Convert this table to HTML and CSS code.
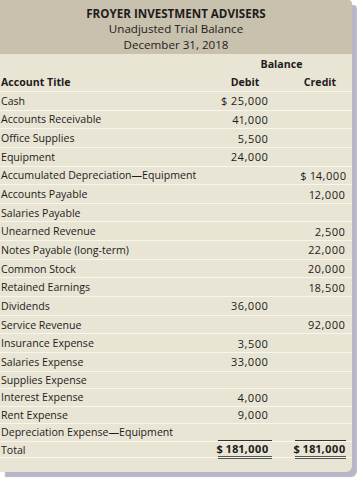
FILE: index.html
```html
<!DOCTYPE html>
<html>
<head>
<meta charset="utf-8">
<link rel="stylesheet" href="styles.css">
</head>
<body>
<div class="card">
  <header class="head">
    <div class="company">FROYER INVESTMENT ADVISERS</div>
    <div class="sub">Unadjusted Trial Balance</div>
    <div class="sub">December 31, 2018</div>
  </header>
  <div class="table">
    <div class="row hrow plain"><span></span><span class="balance">Balance</span></div>
    <div class="row hrow"><span>Account Title</span><span class="ch">Debit</span><span class="ch">Credit</span></div>
    <div class="row"><span>Cash</span><span class="num">$ 25,000</span><span class="num cr"></span></div>
    <div class="row"><span>Accounts Receivable</span><span class="num">41,000</span><span class="num cr"></span></div>
    <div class="row"><span>Office Supplies</span><span class="num">5,500</span><span class="num cr"></span></div>
    <div class="row"><span>Equipment</span><span class="num">24,000</span><span class="num cr"></span></div>
    <div class="row"><span>Accumulated Depreciation—Equipment</span><span class="num"></span><span class="num cr">$ 14,000</span></div>
    <div class="row"><span>Accounts Payable</span><span class="num"></span><span class="num cr">12,000</span></div>
    <div class="row"><span>Salaries Payable</span><span class="num"></span><span class="num cr"></span></div>
    <div class="row"><span>Unearned Revenue</span><span class="num"></span><span class="num cr">2,500</span></div>
    <div class="row"><span>Notes Payable (long-term)</span><span class="num"></span><span class="num cr">22,000</span></div>
    <div class="row"><span>Common Stock</span><span class="num"></span><span class="num cr">20,000</span></div>
    <div class="row"><span>Retained Earnings</span><span class="num"></span><span class="num cr">18,500</span></div>
    <div class="row"><span>Dividends</span><span class="num">36,000</span><span class="num cr"></span></div>
    <div class="row"><span>Service Revenue</span><span class="num"></span><span class="num cr">92,000</span></div>
    <div class="row"><span>Insurance Expense</span><span class="num">3,500</span><span class="num cr"></span></div>
    <div class="row"><span>Salaries Expense</span><span class="num">33,000</span><span class="num cr"></span></div>
    <div class="row tight"><span>Supplies Expense</span><span class="num"></span><span class="num cr"></span></div>
    <div class="row tight"><span>Interest Expense</span><span class="num">4,000</span><span class="num cr"></span></div>
    <div class="row tight"><span>Rent Expense</span><span class="num">9,000</span><span class="num cr"></span></div>
    <div class="row tight"><span>Depreciation Expense—Equipment</span><span class="num"></span><span class="num cr"></span></div>
    <div class="row total"><span>Total</span><span class="num tot">$ 181,000</span><span class="num cr tot">$ 181,000</span></div>
    <div class="row last"></div>
  </div>
</div>
</body>
</html>
```

FILE: styles.css
```css
* { box-sizing: border-box; }
html, body { margin: 0; padding: 0; background: #ffffff; }
body {
  font-family: "Open Sans", "Noto Sans", sans-serif;
  color: #1f1b1c;
  width: 357px;
  height: 478px;
  overflow: hidden;
}
.card {
  width: 352px;
  height: 472px;
  background: #e8e5d5;
  border-radius: 0 4px 6px 0;
  box-shadow: 5px 5px 1px #b8b5c6;
  overflow: hidden;
}
.head {
  height: 54px;
  background: #c8c1ad;
  text-align: center;
  padding-top: 6px;
  line-height: 15.3px;
}
.company { font-weight: 700; font-size: 11.6px; }
.sub { font-size: 11.6px; font-weight: 500; }
.row {
  display: grid;
  grid-template-columns: 1fr 54px 50px;
  column-gap: 23px;
  padding: 0 7px 0 1px;
  height: 18.65px;
  align-items: center;
  font-size: 10.6px;
  font-weight: 500;
  border-bottom: 1px solid #f7f5ec;
  white-space: nowrap;
}
.row.tight { height: 17.5px; }
.hrow { height: 19px; font-weight: 700; }
.hrow.plain { border-bottom: none; }
.balance { grid-column: 2 / 4; text-align: center; }
.ch { text-align: center; }
.num {
  text-align: right;
  padding-right: 3.5px;
  font-size: 11px;
  letter-spacing: 0.5px;
  font-variant-numeric: proportional-nums;
}
.num.cr { padding-right: 0; margin-right: -0.5px; }
.total { height: 16px; }
.tot {
  font-weight: 700;
  letter-spacing: 0.2px;
  align-self: stretch;
  display: flex;
  align-items: center;
  justify-content: flex-end;
  border-top: 1px solid #333;
  border-bottom: 3px double #555;
  margin-top: -2px;
}
.last { height: 14px; border-bottom: none; }
```
